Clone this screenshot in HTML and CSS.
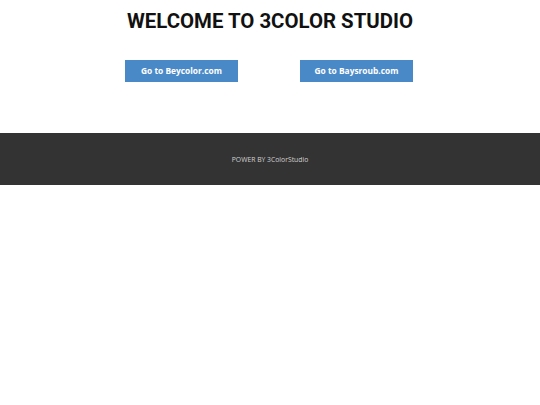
FILE: index.html
```html
<!DOCTYPE html>
<html>
<head>
<meta charset="utf-8">
<link rel="stylesheet" href="styles.css">
</head>
<body>
<header class="hero">
  <h1 class="title">WELCOME TO 3COLOR STUDIO</h1>
  <div class="links">
    <div class="col"><a class="btn" href="#">Go to Beycolor.com</a></div>
    <div class="col"><a class="btn" href="#">Go to Baysroub.com</a></div>
  </div>
</header>
<footer class="footer">POWER BY 3ColorStudio</footer>
</body>
</html>
```
FILE: styles.css
```css
html, body { margin: 0; padding: 0; background: #fff; }
body { font-family: "Open Sans", sans-serif; }
.hero { padding-top: 9px; height: 124px; box-sizing: border-box; }
.title {
  margin: 0;
  text-align: center;
  font-family: Roboto, sans-serif;
  font-weight: 700;
  font-size: 20.4px;
  line-height: 24px;
  color: #111;
}
.links {
  display: grid;
  grid-template-columns: 175px 175px;
  justify-content: center;
  margin-top: 27px;
  padding-right: 2px;
}
.col { display: flex; justify-content: center; }
.btn {
  display: block;
  width: 113px;
  height: 22px;
  line-height: 22px;
  text-align: center;
  background: #4a89c8;
  color: #fff;
  font-weight: 700;
  font-size: 8.4px;
  text-decoration: none;
}
.footer {
  margin-top: 9px;
  height: 52px;
  background: #333333;
  color: #d0d0d0;
  font-size: 6.8px;
  display: flex;
  align-items: center;
  justify-content: center;
}
```
